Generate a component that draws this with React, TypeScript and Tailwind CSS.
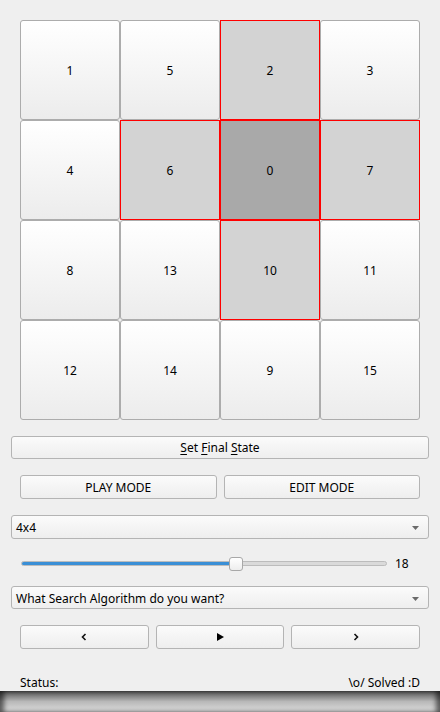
import React from "react";

const order = [1, 5, 2, 3, 4, 6, 0, 7, 8, 13, 10, 11, 12, 14, 9, 15];
const hl = new Set([2, 6, 7, 10]);

function Tile({ n }: { n: number }) {
  let cls =
    "h-[100px] flex items-center justify-center text-[12px] text-black border pt-[1px] ";
  if (n === 0) cls += "bg-[#a9a9a9] border-[#ff0000]";
  else if (hl.has(n)) cls += "bg-[#d3d3d3] border-[#ff0000]";
  else cls += "rounded-[3px] border-[#acacac] bg-linear-to-b from-white to-[#ececec]";
  return <div className={cls}>{n}</div>;
}

const btn =
  "h-[24px] pt-[1px] flex items-center justify-center rounded-[3px] border border-[#b4b4b4] bg-linear-to-b from-[#fbfbfb] to-[#eeeeee] text-[12px] text-black";

function Arrow() {
  return (
    <svg width="9" height="6" viewBox="0 0 9 6" className="ml-auto mr-[8px]">
      <path d="M1 1 L8 1 L4.5 5 Z" fill="#6a6a6a" />
    </svg>
  );
}

export default function App() {
  return (
    <div className="w-[440px] h-[712px] bg-[#efefef] flex flex-col font-['Noto_Sans','Open_Sans',sans-serif] overflow-hidden">
      <div className="mt-[20px] ml-[20px] w-[400px] grid grid-cols-4">
        {order.map((n) => (
          <Tile key={n} n={n} />
        ))}
      </div>

      <div className={"mt-[16px] mx-[11px] " + btn}>
        <span>
          <u className="underline-offset-2">S</u>et <u className="underline-offset-2">F</u>inal{" "}
          <u className="underline-offset-2">S</u>tate
        </span>
      </div>

      <div className="mt-[16px] mx-[20px] flex gap-[7px]">
        <div className={"flex-1 " + btn}>PLAY MODE</div>
        <div className={"flex-1 " + btn}>EDIT MODE</div>
      </div>

      <div className={"mt-[16px] mx-[11px] h-[24px] pt-[3px] flex items-center rounded-[3px] border border-[#b4b4b4] bg-linear-to-b from-[#fbfbfb] to-[#eeeeee] pl-[4px] text-[12px] text-black"}>
        <span>4x4</span>
        <Arrow />
      </div>

      <div className="mt-[18px] ml-[21px] mr-[20px] h-[14px] flex items-center">
        <div className="relative w-[366px] h-[14px] flex items-center">
          <div className="w-full h-[5px] rounded-full border border-[#bcbcbc] bg-[#dadada] overflow-hidden">
            <div className="h-full w-[212px] bg-[#3a8fd6] border-r border-[#2d6fa8]" />
          </div>
          <div className="absolute left-[208px] top-0 w-[14px] h-[14px] rounded-[3px] border border-[#a8a8a8] bg-linear-to-b from-white to-[#ededed]" />
        </div>
        <span className="ml-[8px] text-[12px] text-black">18</span>
      </div>

      <div className={"mt-[15px] mx-[11px] h-[24px] pt-[3px] flex items-center rounded-[3px] border border-[#b4b4b4] bg-linear-to-b from-[#fbfbfb] to-[#eeeeee] pl-[4px] text-[12px] text-black"}>
        <span>What Search Algorithm do you want?</span>
        <Arrow />
      </div>

      <div className="mt-[16px] mx-[20px] flex gap-[7px]">
        <div className={"flex-1 " + btn}>
          <svg width="6" height="8" viewBox="0 0 6 8">
            <path d="M4.5 1 L1.5 4 L4.5 7" stroke="#111" strokeWidth="1.6" fill="none" />
          </svg>
        </div>
        <div className={"flex-1 " + btn}>
          <svg width="9" height="10" viewBox="0 0 9 10">
            <path d="M1 1 L8 5 L1 9 Z" fill="#000" />
          </svg>
        </div>
        <div className={"flex-1 " + btn}>
          <svg width="6" height="8" viewBox="0 0 6 8">
            <path d="M1.5 1 L4.5 4 L1.5 7" stroke="#111" strokeWidth="1.6" fill="none" />
          </svg>
        </div>
      </div>

      <div className="mt-[26px] mx-[20px] flex justify-between text-[12px] text-black leading-[16px]">
        <span>Status:</span>
        <span>\o/ Solved :D</span>
      </div>

      <div className="mt-auto h-[22px] bg-linear-to-b from-[#555555] via-[#b8b8b8] to-[#dedede] shadow-[inset_5px_0_5px_-1px_rgba(0,0,0,0.55),inset_-5px_0_5px_-1px_rgba(0,0,0,0.55)]" />
    </div>
  );
}
